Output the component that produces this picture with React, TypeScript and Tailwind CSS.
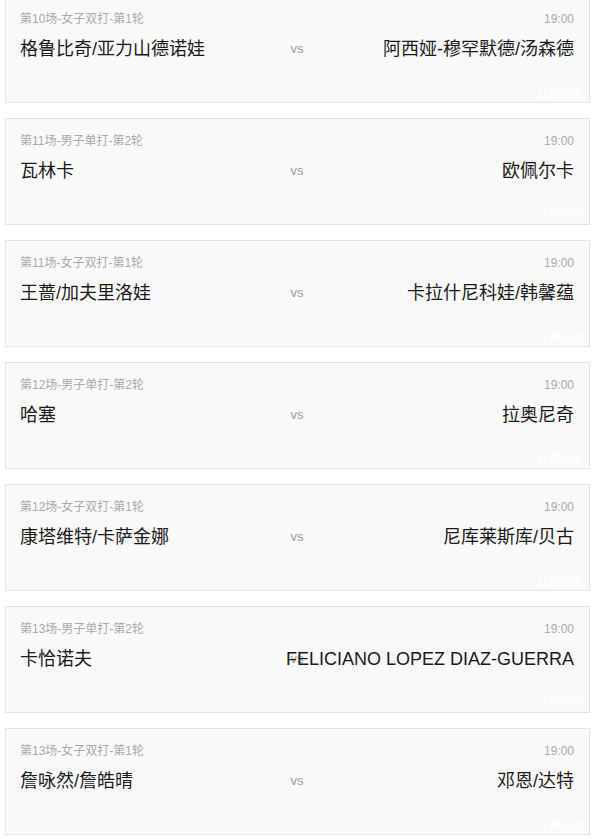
import React from "react";

const matches = [
  { title: "第10场-女子双打-第1轮", left: "格鲁比奇/亚力山德诺娃", right: "阿西娅-穆罕默德/汤森德" },
  { title: "第11场-男子单打-第2轮", left: "瓦林卡", right: "欧佩尔卡" },
  { title: "第11场-女子双打-第1轮", left: "王蔷/加夫里洛娃", right: "卡拉什尼科娃/韩馨蕴" },
  { title: "第12场-男子单打-第2轮", left: "哈塞", right: "拉奥尼奇" },
  { title: "第12场-女子双打-第1轮", left: "康塔维特/卡萨金娜", right: "尼库莱斯库/贝古" },
  { title: "第13场-男子单打-第2轮", left: "卡恰诺夫", right: "FELICIANO LOPEZ DIAZ-GUERRA" },
  { title: "第13场-女子双打-第1轮", left: "詹咏然/詹皓晴", right: "邓恩/达特" },
];

export default function App() {
  return (
    <div
      className="w-[598px] h-[839px] overflow-hidden bg-white"
      style={{ fontFamily: '"Liberation Sans", "Noto Sans CJK SC", sans-serif' }}
    >
      <div className="mt-[-4px] flex flex-col gap-[15px] ml-[5px] w-[585px]">
        {matches.map((m, i) => (
          <div
            key={i}
            className="relative h-[107px] border border-[#e4e4e4] bg-[#f9f9f9] pl-[14px] pr-[15px] pt-[14px] overflow-hidden"
          >
            <div className="flex justify-between text-[12px] leading-[16px] text-[#a9a9a9]">
              <span>{m.title}</span>
              <span>19:00</span>
            </div>
            <div className="relative mt-[10px] flex justify-between items-center h-[24px] text-[18px] leading-[24px] text-[#1a1a1a]">
              <span className="whitespace-nowrap">{m.left}</span>
              <span className="absolute left-1/2 -translate-x-1/2 text-[13px] text-[#9a9a9a]">vs</span>
              <span className="whitespace-nowrap relative">{m.right}</span>
            </div>
            <span className="absolute right-[7px] bottom-[2px] text-[11px] leading-[14px] text-white whitespace-nowrap">
              比赛没结
            </span>
          </div>
        ))}
      </div>
    </div>
  );
}
